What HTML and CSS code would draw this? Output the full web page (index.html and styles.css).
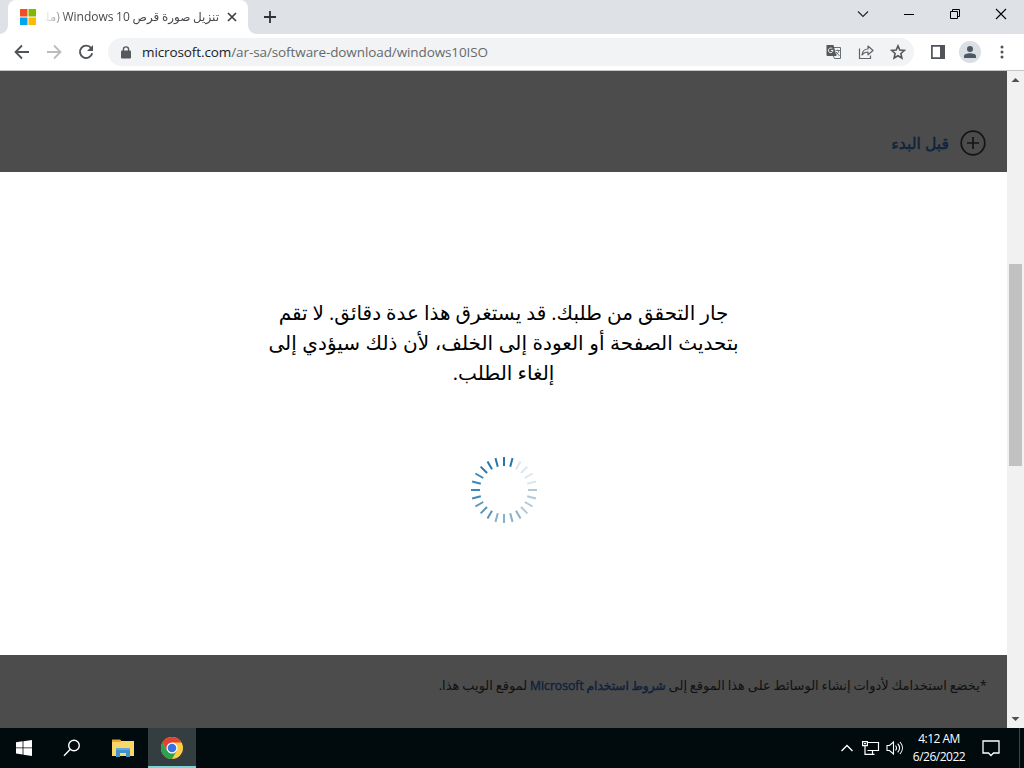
FILE: index.html
```html
<!DOCTYPE html>
<html lang="ar">
<head>
    <meta charset="UTF-8">
    <meta name="viewport" content="width=device-width, initial-scale=1.0">
    <title>تنزيل صورة قرص Windows 10</title>
    <link rel="stylesheet" href="styles.css">
</head>
<body>

    <div class="tab-strip">
        <div class="tab-curve left"></div>
        <div class="tab">
            <svg class="favicon" width="16" height="16" viewBox="0 0 16 16">
                <path fill="#f25022" d="M0 0h7.5v7.5H0z"/>
                <path fill="#7fba00" d="M8.5 0H16v7.5H8.5z"/>
                <path fill="#00a4ef" d="M0 8.5h7.5V16H0z"/>
                <path fill="#ffb900" d="M8.5 8.5H16V16H8.5z"/>
            </svg>
            <div class="tab-title" dir="rtl"><span>تنزيل صورة قرص Windows 10 (ملـ</span></div>
            <svg class="tab-close" width="10" height="10" viewBox="0 0 10 10"><path d="M1 1l8 8M9 1l-8 8" stroke="#3c4043" stroke-width="1.7"/></svg>
        </div>
        <div class="tab-curve right"></div>
        <svg class="new-tab" width="14" height="14" viewBox="0 0 14 14"><path d="M7 1v12M1 7h12" stroke="#303236" stroke-width="1.8"/></svg>
        <div class="window-buttons">
            <svg width="46" height="28" viewBox="0 0 46 28"><path d="M18 11.500l5 5 5-5" fill="none" stroke="#222" stroke-width="1.100"/></svg>
            <svg width="46" height="28" viewBox="0 0 46 28"><path d="M18 14.500h10" stroke="#000"/></svg>
            <svg width="46" height="28" viewBox="0 0 46 28"><path d="M18.500 11.500h7v7h-7zM20.500 11.500v-2h7v7h-2" fill="none" stroke="#000"/></svg>
            <svg width="46" height="28" viewBox="0 0 46 28"><path d="M18 9l10 10M28 9L18 19" stroke="#000" stroke-width="1.100"/></svg>
        </div>
    </div>

    <div class="toolbar">
        <div class="nav-buttons">
            <svg width="16" height="16" viewBox="0 0 16 16"><path d="M15 8H2M8 1.500L1.500 8 8 14.500" fill="none" stroke="#505357" stroke-width="1.800"/></svg>
            <svg width="16" height="16" viewBox="0 0 16 16"><path d="M1 8h13M8 1.500L14.500 8 8 14.500" fill="none" stroke="#b9bbbe" stroke-width="1.800"/></svg>
            <svg width="16" height="16" viewBox="0 0 16 16"><path d="M13.200 4.200A6.200 6.200 0 1 0 14.200 9.200" fill="none" stroke="#505357" stroke-width="1.900"/><path d="M15 1v6H9z" fill="#505357"/></svg>
        </div>
        <div class="address-bar">
            <svg class="lock" width="10" height="13" viewBox="0 0 10 13"><path d="M2.400 5V3.500a2.600 2.600 0 0 1 5.200 0V5" fill="none" stroke="#55585c" stroke-width="1.400"/><rect y="4.500" width="10" height="8" rx="1" fill="#55585c"/></svg>
            <div class="url"><span class="host">microsoft.com</span>/ar-sa/software-download/windows10ISO</div>
            <div class="page-actions">
                <svg width="16" height="16" viewBox="0 0 16 16">
                    <path d="M7 3.500h7.500v11H8.500L7 11" fill="#f1f3f4" stroke="#6b6e72" stroke-width="1"/>
                    <path d="M9.500 6.500h4.500M11.700 5.500v1M13 6.500c-.5 2-2 3.500-3.500 4.500M10 8l3.500 4" fill="none" stroke="#6b6e72" stroke-width=".9"/>
                    <path d="M1 1h6.500l3 11H1.500a1 1 0 0 1-1-1V1.500z" fill="#55585c"/>
                    <path d="M6.300 4.700A2.300 2.300 0 1 0 7 6.500H4.800" fill="none" stroke="#f1f3f4" stroke-width="1"/>
                </svg>
                <svg width="16" height="16" viewBox="0 0 16 16" fill="none" stroke="#606367" stroke-width="1.200"><path d="M1.500 4.500v10h11v-3"/><path d="M4 11c.5-4 2.500-6 6-6V2l5 4.500-5 4.300V8C7.500 8 5.500 9 4 11z" stroke-linejoin="round"/></svg>
                <svg width="16" height="16" viewBox="0 0 16 16"><path d="M8 1.900l1.800 4.200 4.500.4-3.400 3 1 4.500L8 11.700 4.100 14l1-4.500-3.400-3 4.500-.4z" fill="none" stroke="#55585c" stroke-width="1.600"/></svg>
            </div>
        </div>
        <svg class="side-panel" width="14" height="14" viewBox="0 0 14 14"><path d="M.9.900h12.200v12.200H.9z" fill="#fff" stroke="#505357" stroke-width="1.700"/><path d="M9 0h5v14H9z" fill="#505357"/></svg>
        <div class="avatar"><svg width="12" height="12" viewBox="0 0 12 12"><circle cx="6" cy="3" r="3" fill="#4c5964"/><path d="M0 12v-1.800C0 8.200 3 7.300 6 7.300s6 .9 6 2.900V12z" fill="#4c5964"/></svg></div>
        <svg class="menu-dots" width="4" height="14" viewBox="0 0 4 14" fill="#505357"><circle cx="2" cy="2" r="1.500"/><circle cx="2" cy="7" r="1.500"/><circle cx="2" cy="12" r="1.500"/></svg>
    </div>

    <div class="viewport">
        <div class="page" dir="rtl">
            <div class="before-start">
                <svg width="26" height="26" viewBox="0 0 26 26" fill="none" stroke="#151515" stroke-width="1.700"><circle cx="13" cy="13" r="11.800"/><path d="M13 7v12M7 13h12"/></svg>
                <a class="before-link">قبل البدء</a>
            </div>
            <div class="dialog">
                <p class="message">
                    <span class="line line-1">جار التحقق من طلبك. قد يستغرق هذا عدة دقائق. لا تقم</span>
                    <span class="line line-2">بتحديث الصفحة أو العودة إلى الخلف، لأن ذلك سيؤدي إلى</span>
                    <span class="line line-3">إلغاء الطلب.</span>
                </p>
                <svg class="spinner" width="68" height="68" viewBox="-34 -34 68 68" stroke-width="2">
                    <g stroke="#2777ac">
                        <path d="M0-24v-9" transform="rotate(15)"/>
                        <path d="M0-24v-9"/>
                        <path d="M0-24v-9" transform="rotate(-15)"/>
                        <path d="M0-24v-9" transform="rotate(-30)"/>
                        <path d="M0-24v-9" transform="rotate(-45)"/>
                    </g>
                    <g stroke="#3c88b7">
                        <path d="M0-24v-9" transform="rotate(-60)"/>
                        <path d="M0-24v-9" transform="rotate(-75)"/>
                        <path d="M0-24v-9" transform="rotate(-90)"/>
                        <path d="M0-24v-9" transform="rotate(-105)"/>
                    </g>
                    <g stroke="#5a94b5">
                        <path d="M0-24v-9" transform="rotate(-120)"/>
                        <path d="M0-24v-9" transform="rotate(-135)"/>
                        <path d="M0-24v-9" transform="rotate(-150)"/>
                    </g>
                    <g stroke="#86b0cc">
                        <path d="M0-24v-9" transform="rotate(-165)"/>
                        <path d="M0-24v-9" transform="rotate(180)"/>
                        <path d="M0-24v-9" transform="rotate(165)"/>
                        <path d="M0-24v-9" transform="rotate(150)"/>
                    </g>
                    <g stroke="#b0c9d9">
                        <path d="M0-24v-9" transform="rotate(135)"/>
                        <path d="M0-24v-9" transform="rotate(120)"/>
                        <path d="M0-24v-9" transform="rotate(105)"/>
                        <path d="M0-24v-9" transform="rotate(90)"/>
                    </g>
                    <g stroke="#dbe6ed">
                        <path d="M0-24v-9" transform="rotate(75)"/>
                        <path d="M0-24v-9" transform="rotate(60)"/>
                        <path d="M0-24v-9" transform="rotate(45)"/>
                        <path d="M0-24v-9" transform="rotate(30)"/>
                    </g>
                </svg>
            </div>
            <div class="terms"><span class="terms-text">*يخضع استخدامك لأدوات إنشاء الوسائط على هذا الموقع إلى <a class="terms-link">شروط استخدام Microsoft</a> لموقع الويب هذا.</span></div>
        </div>
        <div class="scrollbar">
            <svg width="17" height="17" viewBox="0 0 17 17"><path d="M4.500 11h8l-4-4z" fill="#505050"/></svg>
            <div class="scroll-track"><div class="scroll-thumb"></div></div>
            <svg width="17" height="17" viewBox="0 0 17 17"><path d="M4.500 6h8l-4 4z" fill="#505050"/></svg>
        </div>
    </div>

    <div class="taskbar">
        <div class="task-button">
            <svg width="16" height="16" viewBox="0 0 16 16" fill="#fff"><path d="M0 2.200l6.600-.9v6.200H0zM7.400 1.200L16 0v7.500H7.400zM0 8.300h6.600v6.200L0 13.600zM7.400 8.300H16V16l-8.600-1.200z"/></svg>
        </div>
        <div class="task-button">
            <svg width="18" height="18" viewBox="0 0 18 18" fill="none" stroke="#fff" stroke-width="1.400"><circle cx="11" cy="6.500" r="5.300"/><path d="M7.300 10.300L1 16.700"/></svg>
        </div>
        <div class="task-button explorer">
            <svg width="22" height="20" viewBox="0 0 22 20"><path d="M0 1.500h8l1.500 2H0z" fill="#e09b22"/><path d="M0 3h22v15H0z" fill="#fad766"/><path d="M0 2h9v2H0z" fill="#e8ac36"/><path d="M4 10h14v9h-4v-4H8v4H4z" fill="#3f92cd"/><path d="M4 10h14v2H4z" fill="#5eaadd"/></svg>
        </div>
        <div class="task-button active">
            <svg width="22" height="22" viewBox="0 0 22 22">
                <circle cx="11" cy="11" r="11" fill="#ffcd40"/>
                <path d="M11 11L6.240 13.750 1.470 5.500A11 11 0 0 0 11 22l4.760-8.250z" fill="#2ba24c"/>
                <path d="M1.470 5.500A11 11 0 0 1 20.530 5.500H11L6.240 13.750z" fill="#e34133"/>
                <circle cx="11" cy="11" r="5.500" fill="#fff"/>
                <circle cx="11" cy="11" r="4.300" fill="#3871e0"/>
            </svg>
        </div>
        <div class="tray">
            <svg width="14" height="16" viewBox="0 0 14 16"><path d="M1.500 11L7 5.500l5.500 5.500" fill="none" stroke="#fff" stroke-width="1.400"/></svg>
            <svg class="network" width="18" height="16" viewBox="0 0 18 16" fill="none" stroke="#fff" stroke-width="1.200"><path d="M6 2.500h10.500v8H5.500M.6 1.600h4.800v4H.6zM3 5.600v8.800h9.500M10.500 10.500v4M2 3.600h2"/></svg>
            <svg width="18" height="16" viewBox="0 0 18 16" fill="none" stroke="#fff" stroke-width="1.100"><path d="M1 5.500h2.500l4-3.500v12l-4-3.500H1zM9.500 5.500c1.200 1.500 1.200 3.500 0 5M11.700 3.700c2.300 2.600 2.300 6 0 8.600M14 2c3.200 3.600 3.200 8.400 0 12"/></svg>
            <div class="clock">
                <div>4:12 AM</div>
                <div>6/26/2022</div>
            </div>
            <svg width="18" height="18" viewBox="0 0 18 18" fill="none" stroke="#fff" stroke-width="1.300"><path d="M1 2h16v12h-5.500L9 16.500 6.500 14H1z"/></svg>
        </div>
        <div class="show-desktop"></div>
    </div>

</body>
</html>
```
FILE: styles.css
```css
* {
    box-sizing: border-box;
}
body {
    margin: 0;
    width: 1024px;
    height: 768px;
    overflow: hidden;
    display: flex;
    flex-direction: column;
    font-family: "Open Sans", "Noto Sans", "DejaVu Sans", sans-serif;
    background-color: #fff;
}
svg {
    display: block;
    flex: none;
}

/* Tab strip */
.tab-strip {
    height: 34px;
    display: flex;
    background-color: #dee1e6;
}
.tab {
    width: 240px;
    height: 34px;
    padding: 0 11px 0 12px;
    display: flex;
    align-items: center;
    background-color: #fff;
    border-radius: 8px 8px 0 0;
}
/* Rounded feet on both sides of the active tab */
.tab-curve {
    width: 8px;
    height: 8px;
    align-self: flex-end;
}
.tab-curve.left {
    background: radial-gradient(circle at 0 0, transparent 7.5px, #fff 8px);
}
.tab-curve.right {
    background: radial-gradient(circle at 100% 0, transparent 7.5px, #fff 8px);
}
.tab-title {
    width: 175px;
    margin: 0 8px 0 8px;
    overflow: hidden;
    white-space: nowrap;
    font-size: 12px;
    line-height: 20px;
    word-spacing: -0.5px;
    color: #45494d;
    -webkit-mask-image: linear-gradient(to right, transparent, #000 24px);
    mask-image: linear-gradient(to right, transparent, #000 24px);
}
.new-tab {
    margin: 10px 0 0 7px;
}
.window-buttons {
    display: flex;
    margin-left: auto;
}

/* Toolbar */
.toolbar {
    height: 37px;
    display: flex;
    align-items: center;
    padding: 0 20px 0 14px;
    background-color: #fff;
    border-bottom: 1px solid #c4c4c4;
}
.nav-buttons {
    display: flex;
    gap: 16px;
}
.address-bar {
    width: 806px;
    height: 28px;
    margin-left: 14px;
    padding: 0 8px 0 13px;
    display: flex;
    align-items: center;
    background-color: #f1f3f4;
    border-radius: 14px;
}
.url {
    margin-left: 11px;
    font-size: 13.5px;
    letter-spacing: -0.1px;
    white-space: nowrap;
    color: #66696d;
}
.host {
    color: #202124;
}
.page-actions {
    display: flex;
    gap: 16px;
    margin-left: auto;
}
.side-panel {
    margin-left: 17px;
}
.avatar {
    width: 22px;
    height: 22px;
    margin-left: 14px;
    display: flex;
    align-items: center;
    justify-content: center;
    border-radius: 50%;
    background-color: #dadfe4;
}
.menu-dots {
    margin-left: auto;
}

/* Page */
.viewport {
    height: 657px;
    display: flex;
}
.page {
    width: 1007px;
    display: flex;
    flex-direction: column;
    background-color: #4c4c4c;
}
.before-start {
    height: 101px;
    padding: 42px 21px 0 0;
    display: flex;
    align-items: center;
    gap: 11px;
}
.before-link {
    font-size: 15.7px;
    -webkit-text-stroke: 0.5px #10243c;
    color: #10243c;
}
.dialog {
    height: 483px;
    padding-top: 126px;
    display: flex;
    flex-direction: column;
    align-items: center;
    background-color: #fff;
}
.message {
    margin: 0;
    display: flex;
    flex-direction: column;
    align-items: center;
    font-size: 20px;
    line-height: 30px;
    color: #000;
}
.line {
    white-space: nowrap;
}
.line-1 {
    word-spacing: -0.2px;
}
.line-2 {
    word-spacing: 0.4px;
}
.spinner {
    margin-top: 68px;
}
.terms {
    padding: 20px 20px 0 0;
    font-size: 13px;
    line-height: 20px;
    word-spacing: -0.5px;
    color: #111;
}
.terms-text {
    display: inline-block;
    white-space: nowrap;
}
.terms-link {
    font-size: 12.2px;
    -webkit-text-stroke: 0.4px #10213a;
    color: #10213a;
}
.scrollbar {
    width: 17px;
    display: flex;
    flex-direction: column;
    background-color: #f1f1f1;
}
.scroll-track {
    flex: 1;
    padding: 176px 2px 0;
}
.scroll-thumb {
    width: 13px;
    height: 202px;
    background-color: #c1c1c1;
}

/* Taskbar */
.taskbar {
    height: 40px;
    display: flex;
    background-color: #010a0c;
}
.task-button {
    width: 48px;
    height: 40px;
    display: flex;
    align-items: center;
    justify-content: center;
}
.task-button.explorer {
    width: 52px;
    padding-left: 2px;
}
.task-button.active {
    padding-top: 2px;
    background-color: #343d3f;
    border-bottom: 2px solid #76d5d5;
}
.tray {
    margin-left: auto;
    display: flex;
    align-items: center;
    gap: 7px;
}
.network {
    margin: 0 -1px 0 1px;
}
.clock {
    width: 56px;
    margin-right: 8px;
    text-align: center;
    font-size: 12px;
    line-height: 18px;
    letter-spacing: -0.5px;
    white-space: nowrap;
    color: #fff;
}
.show-desktop {
    width: 5px;
    margin-left: 19px;
    border-left: 1px solid #3c4448;
}
```
